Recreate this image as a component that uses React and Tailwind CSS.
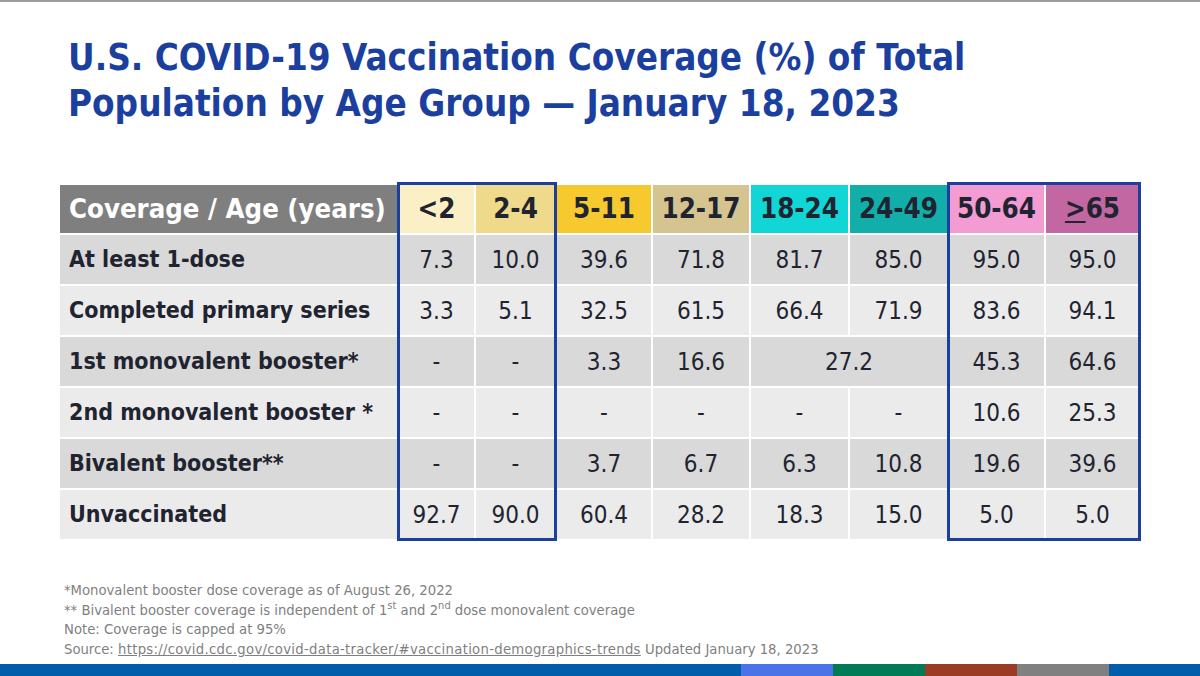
import React from "react";

const headers = [
  { label: "<2", bg: "bg-[#fbefc6]" },
  { label: "2-4", bg: "bg-[#efd98b]" },
  { label: "5-11", bg: "bg-[#f6c92e]" },
  { label: "12-17", bg: "bg-[#d5c48f]" },
  { label: "18-24", bg: "bg-[#12d6d6]" },
  { label: "24-49", bg: "bg-[#12aeaa]" },
  { label: "50-64", bg: "bg-[#f29cd3]" },
  { label: ">65", bg: "bg-[#c267a1]", ge: true },
];

const rows = [
  { label: "At least 1-dose", values: ["7.3", "10.0", "39.6", "71.8", "81.7", "85.0", "95.0", "95.0"] },
  { label: "Completed primary series", values: ["3.3", "5.1", "32.5", "61.5", "66.4", "71.9", "83.6", "94.1"] },
  { label: "1st monovalent booster*", values: ["-", "-", "3.3", "16.6", { span: "27.2" }, "45.3", "64.6"] },
  { label: "2nd monovalent booster *", values: ["-", "-", "-", "-", "-", "-", "10.6", "25.3"] },
  { label: "Bivalent booster**", values: ["-", "-", "3.7", "6.7", "6.3", "10.8", "19.6", "39.6"] },
  { label: "Unvaccinated", values: ["92.7", "90.0", "60.4", "28.2", "18.3", "15.0", "5.0", "5.0"] },
];

const barColors = [
  "w-[741px] bg-[#005daa]",
  "w-[92px] bg-[#4a73e8]",
  "w-[92px] bg-[#007b55]",
  "w-[92px] bg-[#9b3b24]",
  "w-[92px] bg-[#808080]",
  "flex-1 bg-[#005daa]",
];

export default function App() {
  return (
    <div className="w-[1200px] h-[676px] bg-white flex flex-col font-['DejaVu_Sans',sans-serif] font-stretch-condensed overflow-hidden">
      <div className="h-[2px] bg-[#9d9d9d]" />

      {/* Title */}
      <h1 className="pl-[68px] pt-[33px] text-[36.5px] leading-[46px] font-bold text-[#1b3f9f]">
        U.S. COVID-19 Vaccination Coverage (%) of Total
        <br />
        Population by Age Group — January 18, 2023
      </h1>

      {/* Table */}
      <div className="relative ml-[60px] mt-[58px] w-[1079px]">
        <div className="grid grid-cols-[337px_75px_79px_94px_96px_97px_97px_95px_93px] grid-rows-[48px_repeat(6,49px)] gap-[2px] text-[#1f2430]">
          <div className="bg-[#7f7f7f] text-white font-bold text-[27.3px] flex items-center pl-[9px]">
            Coverage / Age (years)
          </div>
          {headers.map((h) => (
            <div key={h.label} className={`${h.bg} font-bold text-[27.5px] flex items-center justify-center`}>
              {h.ge ? (
                <span>
                  <span className="underline decoration-[2px] underline-offset-[3px]">&gt;</span>65
                </span>
              ) : (
                h.label
              )}
            </div>
          ))}

          {rows.map((r, i) => {
            const bg = i % 2 === 0 ? "bg-[#d9d9d9]" : "bg-[#ebebeb]";
            return (
              <React.Fragment key={r.label}>
                <div className={`${bg} font-bold text-[23px] flex items-center pl-[9px]`}>{r.label}</div>
                {r.values.map((v, j) =>
                  typeof v === "object" ? (
                    <div key={j} className={`${bg} col-span-2 text-[24px] flex items-center justify-center`}>
                      {v.span}
                    </div>
                  ) : (
                    <div key={j} className={`${bg} text-[24px] flex items-center justify-center`}>
                      {v}
                    </div>
                  )
                )}
              </React.Fragment>
            );
          })}
        </div>

        {/* highlighted age groups */}
        <div className="absolute left-[337px] top-[-3px] w-[160px] h-[359px] border-[3px] border-[#1c3f9e]" />
        <div className="absolute left-[887px] top-[-3px] w-[194px] h-[359px] border-[3px] border-[#1c3f9e]" />
      </div>

      {/* Footnotes */}
      <div className="pl-[64px] mt-[41px] text-[14.7px] leading-[19.7px] text-[#7f7f7f]">
        <p>*Monovalent booster dose coverage as of August 26, 2022</p>
        <p>
          ** Bivalent booster coverage is independent of 1<sup>st</sup> and 2<sup>nd</sup> dose monovalent coverage
        </p>
        <p>Note: Coverage is capped at 95%</p>
        <p>
          Source:{" "}
          <span className="underline tracking-[0.3px]">
            https://covid.cdc.gov/covid-data-tracker/#vaccination-demographics-trends
          </span>{" "}
          Updated January 18, 2023
        </p>
      </div>

      <div className="mt-auto h-[12px] flex">
        {barColors.map((c, i) => (
          <div key={i} className={c} />
        ))}
      </div>
    </div>
  );
}
